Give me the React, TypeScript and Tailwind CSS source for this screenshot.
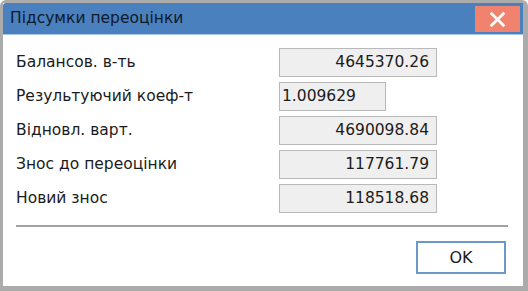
import React from "react"

const ROWS = [
  { label: "Балансов. в-ть", value: "4645370.26", short: false },
  { label: "Результуючий коеф-т", value: "1.009629", short: true },
  { label: "Відновл. варт.", value: "4690098.84", short: false },
  { label: "Знос до переоцінки", value: "117761.79", short: false },
  { label: "Новий знос", value: "118518.68", short: false },
]

function CloseIcon() {
  return (
    <svg width="17" height="17" viewBox="0 0 16 16" fill="none">
      <path d="M2.5 2.5 L13.5 13.5 M13.5 2.5 L2.5 13.5" stroke="white" strokeWidth="2.6" strokeLinecap="square" />
    </svg>
  )
}

export default function App() {
  return (
    <div className="w-[528px] h-[291px] bg-[#ababab] rounded-t-[6px] pt-[3px] pl-[3px] pr-[5px] pb-[5px] font-['DejaVu_Sans',Verdana,sans-serif]">
      <div className="h-full flex flex-col bg-white">
        {/* Title bar */}
        <div className="h-[32px] shrink-0 bg-[#4a80bd] rounded-tl-[3px] flex items-center justify-between pl-[7px] pr-[3px] border-b border-[#a9c6e6]">
          <span className="text-[15.5px] text-[#0d1a2b]">Підсумки переоцінки</span>
          <button className="w-[45px] h-[26px] bg-[#f0826e] flex items-center justify-center mt-[1px]">
            <CloseIcon />
          </button>
        </div>

        {/* Fields */}
        <div className="flex flex-col gap-[5px] pt-[13px] pl-[13px]">
          {ROWS.map((row) => (
            <div key={row.label} className="flex items-center h-[29px]">
              <span className="w-[263px] text-[15.5px] text-[#1b1b1b]">{row.label}</span>
              <div
                className={`h-full bg-[#efefef] border border-[#b9b9b9] flex items-center text-[15.5px] text-[#1b1b1b] ${
                  row.short ? "w-[107px] justify-start pl-[2px]" : "w-[158px] justify-end pr-[7px]"
                }`}
              >
                {row.value}
              </div>
            </div>
          ))}
        </div>

        <div className="mt-[12px] ml-[13px] mr-[15px] h-[2px] bg-[#a3a3a3]" />

        <div className="flex justify-end pr-[17px] pt-[14px]">
          <button className="w-[90px] h-[33px] border-2 border-[#6b98c9] bg-white text-[16px] text-[#1b1b1b]">
            OK
          </button>
        </div>
      </div>
    </div>
  )
}
